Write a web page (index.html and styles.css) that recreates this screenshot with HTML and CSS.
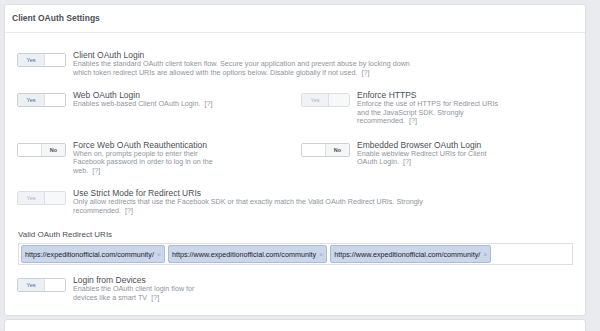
FILE: index.html
```html
<!DOCTYPE html>
<html>
<head>
  <title>Client OAuth Settings</title>
  <link rel="stylesheet" href="styles.css">
</head>
<body>
  <div class="card">
    <div class="card-head">Client OAuth Settings</div>
    <div class="card-body">

      <div class="row">
        <div class="setting">
          <div class="toggle on"><span class="yes">Yes</span><span class="blank"></span></div>
          <div class="text wide">
            <div class="title">Client OAuth Login</div>
            <div class="desc">Enables the standard OAuth client token flow. Secure your application and prevent abuse by locking down which token redirect URIs are allowed with the options below. Disable globally if not used. &nbsp;[?]</div>
          </div>
        </div>
      </div>

      <div class="row split">
        <div class="setting">
          <div class="toggle on"><span class="yes">Yes</span><span class="blank"></span></div>
          <div class="text">
            <div class="title">Web OAuth Login</div>
            <div class="desc">Enables web-based Client OAuth Login. &nbsp;[?]</div>
          </div>
        </div>
        <div class="setting">
          <div class="toggle on disabled"><span class="yes">Yes</span><span class="blank"></span></div>
          <div class="text">
            <div class="title">Enforce HTTPS</div>
            <div class="desc">Enforce the use of HTTPS for Redirect URIs and the JavaScript SDK. Strongly recommended. &nbsp;[?]</div>
          </div>
        </div>
      </div>

      <div class="row split">
        <div class="setting">
          <div class="toggle off"><span class="blank"></span><span class="no">No</span></div>
          <div class="text">
            <div class="title">Force Web OAuth Reauthentication</div>
            <div class="desc">When on, prompts people to enter their Facebook password in order to log in on the web. &nbsp;[?]</div>
          </div>
        </div>
        <div class="setting">
          <div class="toggle off"><span class="blank"></span><span class="no">No</span></div>
          <div class="text">
            <div class="title">Embedded Browser OAuth Login</div>
            <div class="desc">Enable webview Redirect URIs for Client OAuth Login. &nbsp;[?]</div>
          </div>
        </div>
      </div>

      <div class="row">
        <div class="setting">
          <div class="toggle on disabled"><span class="yes">Yes</span><span class="blank"></span></div>
          <div class="text wider">
            <div class="title">Use Strict Mode for Redirect URIs</div>
            <div class="desc">Only allow redirects that use the Facebook SDK or that exactly match the Valid OAuth Redirect URIs. Strongly recommended. &nbsp;[?]</div>
          </div>
        </div>
      </div>

      <div class="field">
        <div class="field-label">Valid OAuth Redirect URIs</div>
        <div class="tags">
          <span class="tag">https://expeditionofficial.com/community/<i class="x">×</i></span>
          <span class="tag">https://www.expeditionofficial.com/community<i class="x">×</i></span>
          <span class="tag">https://www.expeditionofficial.com/community/<i class="x">×</i></span>
        </div>
      </div>

      <div class="row last">
        <div class="setting">
          <div class="toggle on"><span class="yes">Yes</span><span class="blank"></span></div>
          <div class="text">
            <div class="title">Login from Devices</div>
            <div class="desc">Enables the OAuth client login flow for devices like a smart TV &nbsp;[?]</div>
          </div>
        </div>
      </div>

    </div>
  </div>
  <div class="card next"></div>
</body>
</html>
```

FILE: styles.css
```css
body{
  margin:0;
  padding:4px;
  background-color:#e9ebee;
  font-family:"Liberation Sans", Arial, sans-serif;
  color:#4b4f56;
}
.card{
  width:580px;
  background-color:#fff;
  border:1px solid #dddfe2;
  border-radius:3px;
  margin-bottom:3px;
}
.card.next{
  height:40px;
}
.card-head{
  height:27px;
  line-height:27px;
  padding-left:7px;
  font-size:8.5px;
  font-weight:bold;
  color:#4b4f56;
  border-bottom:1px solid #e9ebee;
}
.card-body{
  padding:17px 12px 13px 12px;
}
.row{
  margin-bottom:13px;
}
.row.split{
  display:grid;
  grid-template-columns:284px 1fr;
  margin-bottom:14px;
}
.row.split + .row.split{
  margin-bottom:13px;
}
.row.last{
  margin-bottom:0;
}
.setting{
  display:flex;
  align-items:flex-start;
}
.toggle{
  display:flex;
  width:47px;
  height:12px;
  margin-top:3px;
  border:1px solid #ccd0d5;
  border-radius:2px;
  overflow:hidden;
  flex-shrink:0;
  font-size:5.5px;
  line-height:12px;
  text-align:center;
}
.toggle .yes{
  width:26px;
  background-color:#eceff4;
  color:#4267b2;
  border-right:1px solid #dddfe2;
}
.toggle .blank{
  flex:1;
  background-color:#fff;
}
.toggle .no{
  width:23px;
  background-color:#f5f6f7;
  color:#4b4f56;
  font-weight:bold;
  border-left:1px solid #dddfe2;
}
.toggle.disabled{
  border-color:#dddfe2;
}
.toggle.disabled .yes{
  background-color:#f0f2f5;
  color:#9cb4d8;
}
.toggle.disabled .blank{
  background-color:#f7f8fa;
}
.text{
  margin-left:7px;
  width:145px;
}
.text.wide{
  width:350px;
}
.text.wider{
  width:362px;
}
.title{
  font-size:8.5px;
  line-height:10px;
  color:#4b4f56;
}
.desc{
  font-size:7.2px;
  line-height:8.5px;
  color:#90949c;
}
.field{
  margin-top:15px;
  margin-bottom:10px;
}
.field-label{
  font-size:8px;
  line-height:10px;
  color:#4b4f56;
  margin-bottom:3px;
  padding-left:1px;
}
.tags{
  display:flex;
  align-items:center;
  gap:3px;
  margin-left:1px;
  width:549px;
  height:20px;
  padding:0 2px;
  border:1px solid #dddfe2;
  background-color:#fff;
}
.tag{
  display:flex;
  align-items:center;
  height:18px;
  padding:0 3px;
  background-color:#cad6ea;
  border:1px solid #a9bcdd;
  border-radius:2px;
  font-size:7.2px;
  color:#1d2129;
  box-sizing:border-box;
}
.tag .x{
  font-style:normal;
  color:#9aaed1;
  margin-left:3px;
  font-size:7px;
}
```
